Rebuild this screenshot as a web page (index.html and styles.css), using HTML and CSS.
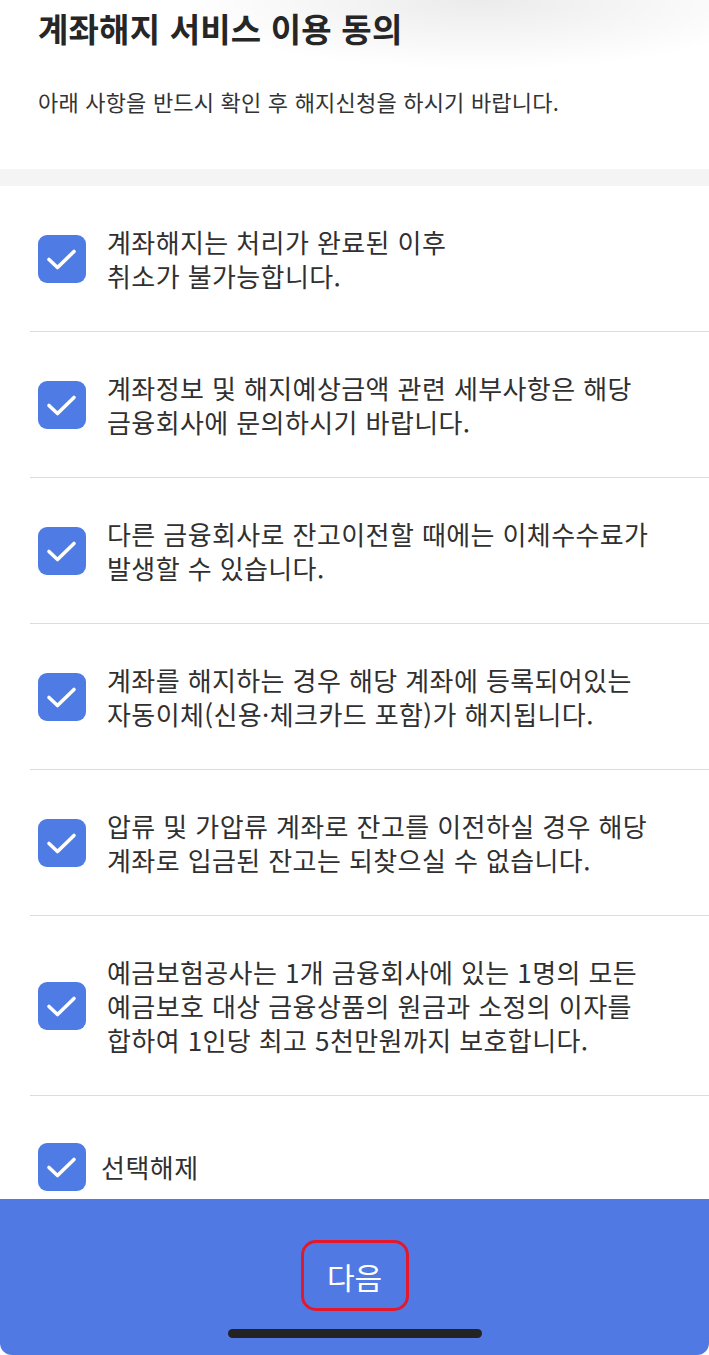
FILE: index.html
```html
<!DOCTYPE html>
<html lang="ko">
<head>
<meta charset="utf-8">
<title>계좌해지 서비스 이용 동의</title>
<link rel="stylesheet" href="styles.css">
</head>
<body>
<div class="screen">
  <header class="intro">
    <h1 class="title">계좌해지 서비스 이용 동의</h1>
    <p class="lead">아래 사항을 반드시 확인 후 해지신청을 하시기 바랍니다.</p>
  </header>
  <div class="band"></div>

  <ul class="terms">
    <li class="term">
      <span class="check"><svg viewBox="0 0 48 48"><path d="M11 24.5 L19.5 32.5 L36 16.5"/></svg></span>
      <p class="term-text">계좌해지는 처리가 완료된 이후<br>취소가 불가능합니다.</p>
    </li>
    <li class="term">
      <span class="check"><svg viewBox="0 0 48 48"><path d="M11 24.5 L19.5 32.5 L36 16.5"/></svg></span>
      <p class="term-text">계좌정보 및 해지예상금액 관련 세부사항은 해당<br>금융회사에 문의하시기 바랍니다.</p>
    </li>
    <li class="term">
      <span class="check"><svg viewBox="0 0 48 48"><path d="M11 24.5 L19.5 32.5 L36 16.5"/></svg></span>
      <p class="term-text">다른 금융회사로 잔고이전할 때에는 이체수수료가<br>발생할 수 있습니다.</p>
    </li>
    <li class="term">
      <span class="check"><svg viewBox="0 0 48 48"><path d="M11 24.5 L19.5 32.5 L36 16.5"/></svg></span>
      <p class="term-text">계좌를 해지하는 경우 해당 계좌에 등록되어있는<br>자동이체(신용·체크카드 포함)가 해지됩니다.</p>
    </li>
    <li class="term">
      <span class="check"><svg viewBox="0 0 48 48"><path d="M11 24.5 L19.5 32.5 L36 16.5"/></svg></span>
      <p class="term-text">압류 및 가압류 계좌로 잔고를 이전하실 경우 해당<br>계좌로 입금된 잔고는 되찾으실 수 없습니다.</p>
    </li>
    <li class="term term-long">
      <span class="check"><svg viewBox="0 0 48 48"><path d="M11 24.5 L19.5 32.5 L36 16.5"/></svg></span>
      <p class="term-text">예금보험공사는 1개 금융회사에 있는 1명의 모든<br>예금보호 대상 금융상품의 원금과 소정의 이자를<br>합하여 1인당 최고 5천만원까지 보호합니다.</p>
    </li>
  </ul>

  <div class="select-all">
    <span class="check"><svg viewBox="0 0 48 48"><path d="M11 24.5 L19.5 32.5 L36 16.5"/></svg></span>
    <span class="select-label">선택해제</span>
  </div>

  <footer class="action-bar">
    <button class="next-btn" type="button">다음</button>
    <div class="home-indicator"></div>
  </footer>
</div>
</body>
</html>
```

FILE: styles.css
```css
* {
  box-sizing: border-box;
}

html, body {
  margin: 0;
  padding: 0;
  background: #ffffff;
}

body {
  font-family: "Noto Sans CJK KR", "Noto Sans", sans-serif;
  color: #2e2e2e;
}

.screen {
  width: 709px;
  height: 1355px;
  display: flex;
  flex-direction: column;
  overflow: hidden;
}

/* page heading */
.intro {
  padding: 8px 38px 0;
  height: 169px;
  background: radial-gradient(ellipse 300px 70px at 480px 0, rgba(0, 0, 0, 0.08), rgba(0, 0, 0, 0) 100%);
}

.title {
  margin: 0;
  font-size: 33px;
  line-height: 40px;
  font-weight: 700;
  color: #262626;
  letter-spacing: 0.2px;
  white-space: nowrap;
}

.lead {
  margin: 38px 0 0;
  font-size: 22px;
  line-height: 30px;
  font-weight: 400;
  color: #333333;
  letter-spacing: 0.2px;
  white-space: nowrap;
}

.band {
  height: 17px;
  background: #f4f4f4;
  flex: none;
}

/* agreement list */
.terms {
  list-style: none;
  margin: 0;
  padding: 0 0 0 30px;
}

.term {
  display: flex;
  align-items: center;
  padding: 39px 0 38px 8px;
  border-bottom: 1px solid #dcdcdc;
}

.term-text {
  margin: 0 0 0 21px;
  font-size: 26px;
  line-height: 34px;
  letter-spacing: 0.4px;
  white-space: nowrap;
  color: #303030;
}

.check {
  flex: none;
  width: 48px;
  height: 48px;
  border-radius: 9px;
  background: #4f7be4;
  display: flex;
}

.check svg {
  width: 48px;
  height: 48px;
}

.check path {
  fill: none;
  stroke: #ffffff;
  stroke-width: 3.6;
  stroke-linecap: round;
  stroke-linejoin: round;
}

.select-all {
  display: flex;
  align-items: center;
  padding: 47px 38px 8px;
}

.select-label {
  margin-left: 15px;
  font-size: 26px;
  line-height: 34px;
  letter-spacing: 0.5px;
  color: #303030;
}

/* bottom action bar */
.action-bar {
  flex: 1;
  background: #5079e4;
  border-radius: 0 0 12px 12px;
  display: flex;
  flex-direction: column;
  align-items: center;
  padding-top: 41px;
}

.next-btn {
  width: 108px;
  height: 71px;
  border: 3px solid #e2192c;
  border-radius: 15px;
  background: transparent;
  color: #ffffff;
  font-family: "Noto Sans CJK KR", "Noto Sans", sans-serif;
  font-size: 30px;
  padding: 0;
}

.home-indicator {
  margin-top: 18px;
  width: 254px;
  height: 9px;
  border-radius: 5px;
  background: #232323;
}
```
